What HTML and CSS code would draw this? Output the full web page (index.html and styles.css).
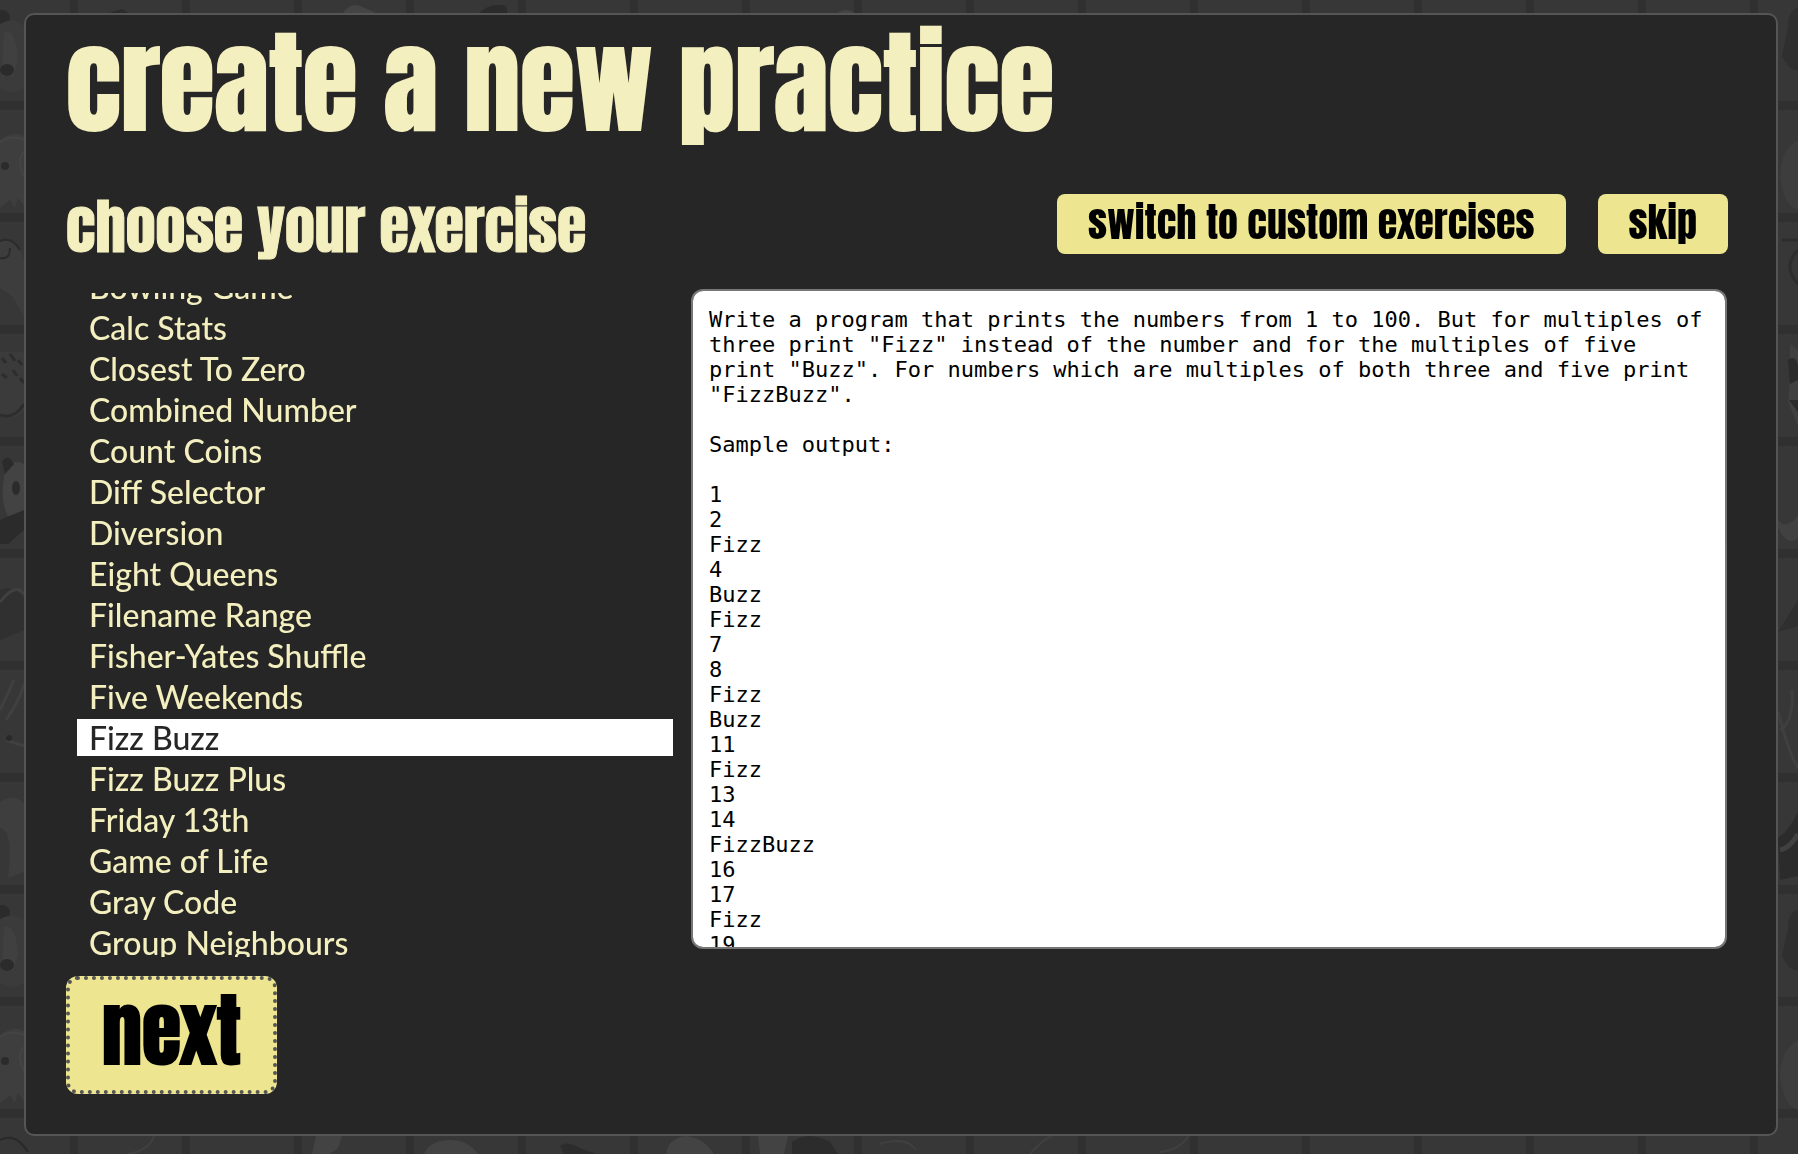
FILE: index.html
```html
<!DOCTYPE html>
<html lang="en">
<head>
<meta charset="utf-8">
<title>create a new practice</title>
<link rel="stylesheet" href="styles.css">
</head>
<body>
<svg class="backdrop" aria-hidden="true" width="100%" height="100%">
  <defs>
    <pattern id="tiles" x="-34" y="-2" width="112" height="112" patternUnits="userSpaceOnUse">
      <rect width="112" height="112" fill="#303030"/>
      <rect width="104" height="103" fill="#373737"/>
    </pattern>
    <g id="bear">
      <circle cx="2" cy="18" r="8" fill="#2b2b2b"/>
      <path d="M0 24Q14 16 24 26V88Q12 96 0 88Z" fill="#3b3b3b"/>
      <path d="M4 32Q16 28 18 60L13 76H2Z" fill="#404040"/>
      <ellipse cx="7" cy="70" rx="7" ry="6" fill="#2b2b2b"/>
    </g>
    <g id="owl">
      <path d="M0 140Q14 130 24 136V206L18 198L15 208L10 200L0 208Z" fill="#3e3e3e"/>
      <circle cx="5" cy="166" r="4" fill="#2b2b2b"/>
      <path d="M24 152Q16 160 24 176M0 142Q12 134 24 140" fill="none" stroke="#444" stroke-width="2"/>
    </g>
  </defs>
  <rect width="100%" height="100%" fill="url(#tiles)"/>
  <g>
    <use href="#bear"/>
    <use href="#owl"/>
    <path d="M0 242Q18 236 24 260V316L12 296L0 288Z" fill="#3d3d3d"/>
    <path d="M0 241Q12 236 20 250M0 258Q10 260 10 248" fill="none" stroke="#2b2b2b" stroke-width="2"/>
    <path d="M0 352H24V410Q12 424 0 416Z" fill="#3b3b3b"/>
    <path d="M2 358l4 5M10 354l5 7M18 360l4 5M2 374l5 4M13 370l4 6M20 378l4 5M0 415Q14 420 24 404" fill="none" stroke="#2d2d2d" stroke-width="3"/>
    <path d="M4 476Q10 456 24 464V516H8Q0 502 4 476Z" fill="#434343"/>
    <path d="M2 462Q8 452 14 464L5 474ZM0 520L24 510V530L8 544H0Z" fill="#2b2b2b"/>
    <ellipse cx="16" cy="488" rx="4" ry="7" fill="#2b2b2b"/>
    <path d="M0 590Q14 584 24 598V630L0 640Z" fill="#303030"/>
    <path d="M0 602Q16 582 24 594M0 710L14 680M6 720Q20 700 24 684M6 740L24 746" fill="none" stroke="#404040" stroke-width="3"/>
    <circle cx="9" cy="738" r="3" fill="#292929"/>
    <path d="M0 802Q14 792 24 804V872L8 878Q14 830 0 828Z" fill="#3e3e3e"/>
    <use href="#bear" y="895"/>
    <use href="#owl" y="895"/>
    <path d="M0 1140Q16 1132 28 1152" fill="none" stroke="#292929" stroke-width="2"/>
  </g>
  <svg x="100%" overflow="visible">
    <path d="M0 8Q-10 10 -10 28L-16 56Q-8 72 0 70Z" fill="#2f2f2f"/>
    <path d="M0 140Q-18 150 -18 178Q-14 206 0 210Z" fill="#3d3d3d"/>
    <path d="M0 240H-16M0 250Q-16 266 0 284" fill="none" stroke="#2d2d2d" stroke-width="3"/>
    <path d="M-8 344L0 350V426L-10 402L-8 378Z" fill="#404040"/>
    <path d="M-10 360Q-2 354 0 366V380L-8 384M-9 400H0V412Z" fill="#2b2b2b"/>
    <path d="M-20 520Q-12 530 0 516V538Q-10 548 -20 528Z" fill="#414141"/>
    <path d="M-20 632L0 600V626Z" fill="#2f2f2f"/>
    <path d="M-18 730Q-4 722 -6 690M-20 712Q-8 756 0 768" fill="none" stroke="#3f3f3f" stroke-width="3"/>
    <path d="M-20 838Q-10 832 0 812V876L-18 880Z" fill="#2b2b2b"/>
    <path d="M-18 850Q-8 848 0 834" fill="none" stroke="#404040" stroke-width="5"/>
    <path d="M0 910Q-10 912 -10 928L-16 956Q-8 972 0 970Z" fill="#2f2f2f"/>
    <path d="M0 1040Q-18 1050 -18 1078Q-14 1106 0 1110Z" fill="#3d3d3d"/>
  </svg>
  <path d="M342 14Q350 2 360 6Q370 10 378 14ZM836 14Q846 6 856 14Z" fill="#444"/>
  <path d="M478 14Q490 2 506 6L508 14ZM106 14L122 9L130 14Z" fill="#2b2b2b"/>
  <svg y="100%" overflow="visible">
    <path d="M312 0L316-18H342L338-6L330 0ZM424 0Q430-14 450-14Q468-14 478 0ZM666 0Q668-16 686-18Q704-16 714 0ZM760 0L758-18H788L784 0Z" fill="#434343"/>
    <path d="M792 0V-12Q808-24 830-12L838 0ZM564 0L560-8Q566-14 580-6L596 0Z" fill="#2c2c2c"/>
    <path d="M880-10Q906-18 916-4M1030 0Q1042-14 1052-18M1160-2Q1180-4 1188-18M128 0Q150-4 154-18" fill="none" stroke="#404040" stroke-width="2"/>
  </svg>
</svg>

<main class="panel">
  <h1 class="title">create a new practice</h1>
  <div class="toolbar">
    <h2 class="subtitle" id="exercise-label">choose your exercise</h2>
    <div class="actions">
      <button class="action" type="button">switch to custom exercises</button>
      <button class="action" type="button">skip</button>
    </div>
  </div>
  <div class="chooser">
    <ul class="exercises" aria-labelledby="exercise-label">
      <li><button class="exercise" type="button">Bowling Game</button></li>
      <li><button class="exercise" type="button">Calc Stats</button></li>
      <li><button class="exercise" type="button">Closest To Zero</button></li>
      <li><button class="exercise" type="button">Combined Number</button></li>
      <li><button class="exercise" type="button">Count Coins</button></li>
      <li><button class="exercise" type="button">Diff Selector</button></li>
      <li><button class="exercise" type="button">Diversion</button></li>
      <li><button class="exercise" type="button">Eight Queens</button></li>
      <li><button class="exercise" type="button">Filename Range</button></li>
      <li><button class="exercise" type="button">Fisher-Yates Shuffle</button></li>
      <li><button class="exercise" type="button">Five Weekends</button></li>
      <li><button class="exercise selected" type="button" aria-pressed="true">Fizz Buzz</button></li>
      <li><button class="exercise" type="button">Fizz Buzz Plus</button></li>
      <li><button class="exercise" type="button">Friday 13th</button></li>
      <li><button class="exercise" type="button">Game of Life</button></li>
      <li><button class="exercise" type="button">Gray Code</button></li>
      <li><button class="exercise" type="button">Group Neighbours</button></li>
    </ul>
    <textarea class="instructions" aria-label="instructions" readonly>Write a program that prints the numbers from 1 to 100. But for multiples of three print "Fizz" instead of the number and for the multiples of five print "Buzz". For numbers which are multiples of both three and five print "FizzBuzz".

Sample output:

1
2
Fizz
4
Buzz
Fizz
7
8
Fizz
Buzz
11
Fizz
13
14
FizzBuzz
16
17
Fizz
19
Buzz</textarea>
  </div>
  <button class="next" type="button">next</button>
</main>
<script src="script.js"></script>
</body>
</html>
```
FILE: styles.css
```css
* {
  box-sizing: border-box;
}

body {
  margin: 0;
  padding: 13px 20px 19px 24px;
  background: #353535;
  color: #f4efbf;
  font-family: Impact, Anton, Oswald, "Liberation Sans", sans-serif;
}

.backdrop {
  position: fixed;
  inset: 0;
  z-index: -1;
}

.panel {
  padding: 10px 48px 40px 40px;
  border: 2px solid #555;
  border-radius: 10px;
  background: #262626;
}

.title,
.subtitle {
  margin: 0;
  font-weight: normal;
  white-space: nowrap;
}

.title {
  font-size: 112px;
  line-height: 116px;
  -webkit-text-stroke: 2px;
}

.toolbar {
  display: flex;
  justify-content: space-between;
  height: 72px;
  margin-top: 53px;
}

.subtitle {
  font-size: 60px;
  line-height: 66px;
  -webkit-text-stroke: 1px;
}

.actions {
  display: flex;
  align-items: flex-start;
  gap: 32px;
}

.action,
.next {
  border: 0;
  border-radius: 8px;
  background: #ede58f;
  color: #000;
  font-family: inherit;
}

.action {
  height: 60px;
  padding: 0 31px 4px;
  font-size: 40px;
  line-height: 56px;
}

.chooser {
  display: grid;
  grid-template-columns: 596fr 1036fr;
  gap: 18px;
  margin: 23px 1px 0 11px;
}

.exercises {
  height: 664px;
  margin: 4px 0 0;
  padding: 0;
  overflow-y: auto;
  scrollbar-width: none;
  list-style: none;
}

.exercise {
  display: block;
  width: 100%;
  height: 37px;
  margin-bottom: 4px;
  padding: 0 12px;
  border: 0;
  background: transparent;
  color: inherit;
  font-family: "Trebuchet MS", Lato, sans-serif;
  font-size: 32px;
  font-weight: 500;
  line-height: 37px;
  text-align: left;
}

.selected {
  background: #fff;
  color: #262626;
}

.instructions {
  height: 660px;
  padding: 16px;
  border: 2px solid #767676;
  border-radius: 12px;
  background: #fff;
  color: #000;
  font-family: "DejaVu Sans Mono", monospace;
  font-size: 22px;
  line-height: 25px;
  resize: none;
  scrollbar-width: none;
}

.next {
  display: block;
  height: 118px;
  margin-top: 19px;
  padding: 0 32px 10px;
  border: 4px dotted #555;
  border-radius: 12px;
  font-size: 80px;
  line-height: 100px;
  -webkit-text-stroke: 2px;
}
```
FILE: script.js
```js
const list = document.querySelector(".exercises");
list.scrollTop = 25;
```
